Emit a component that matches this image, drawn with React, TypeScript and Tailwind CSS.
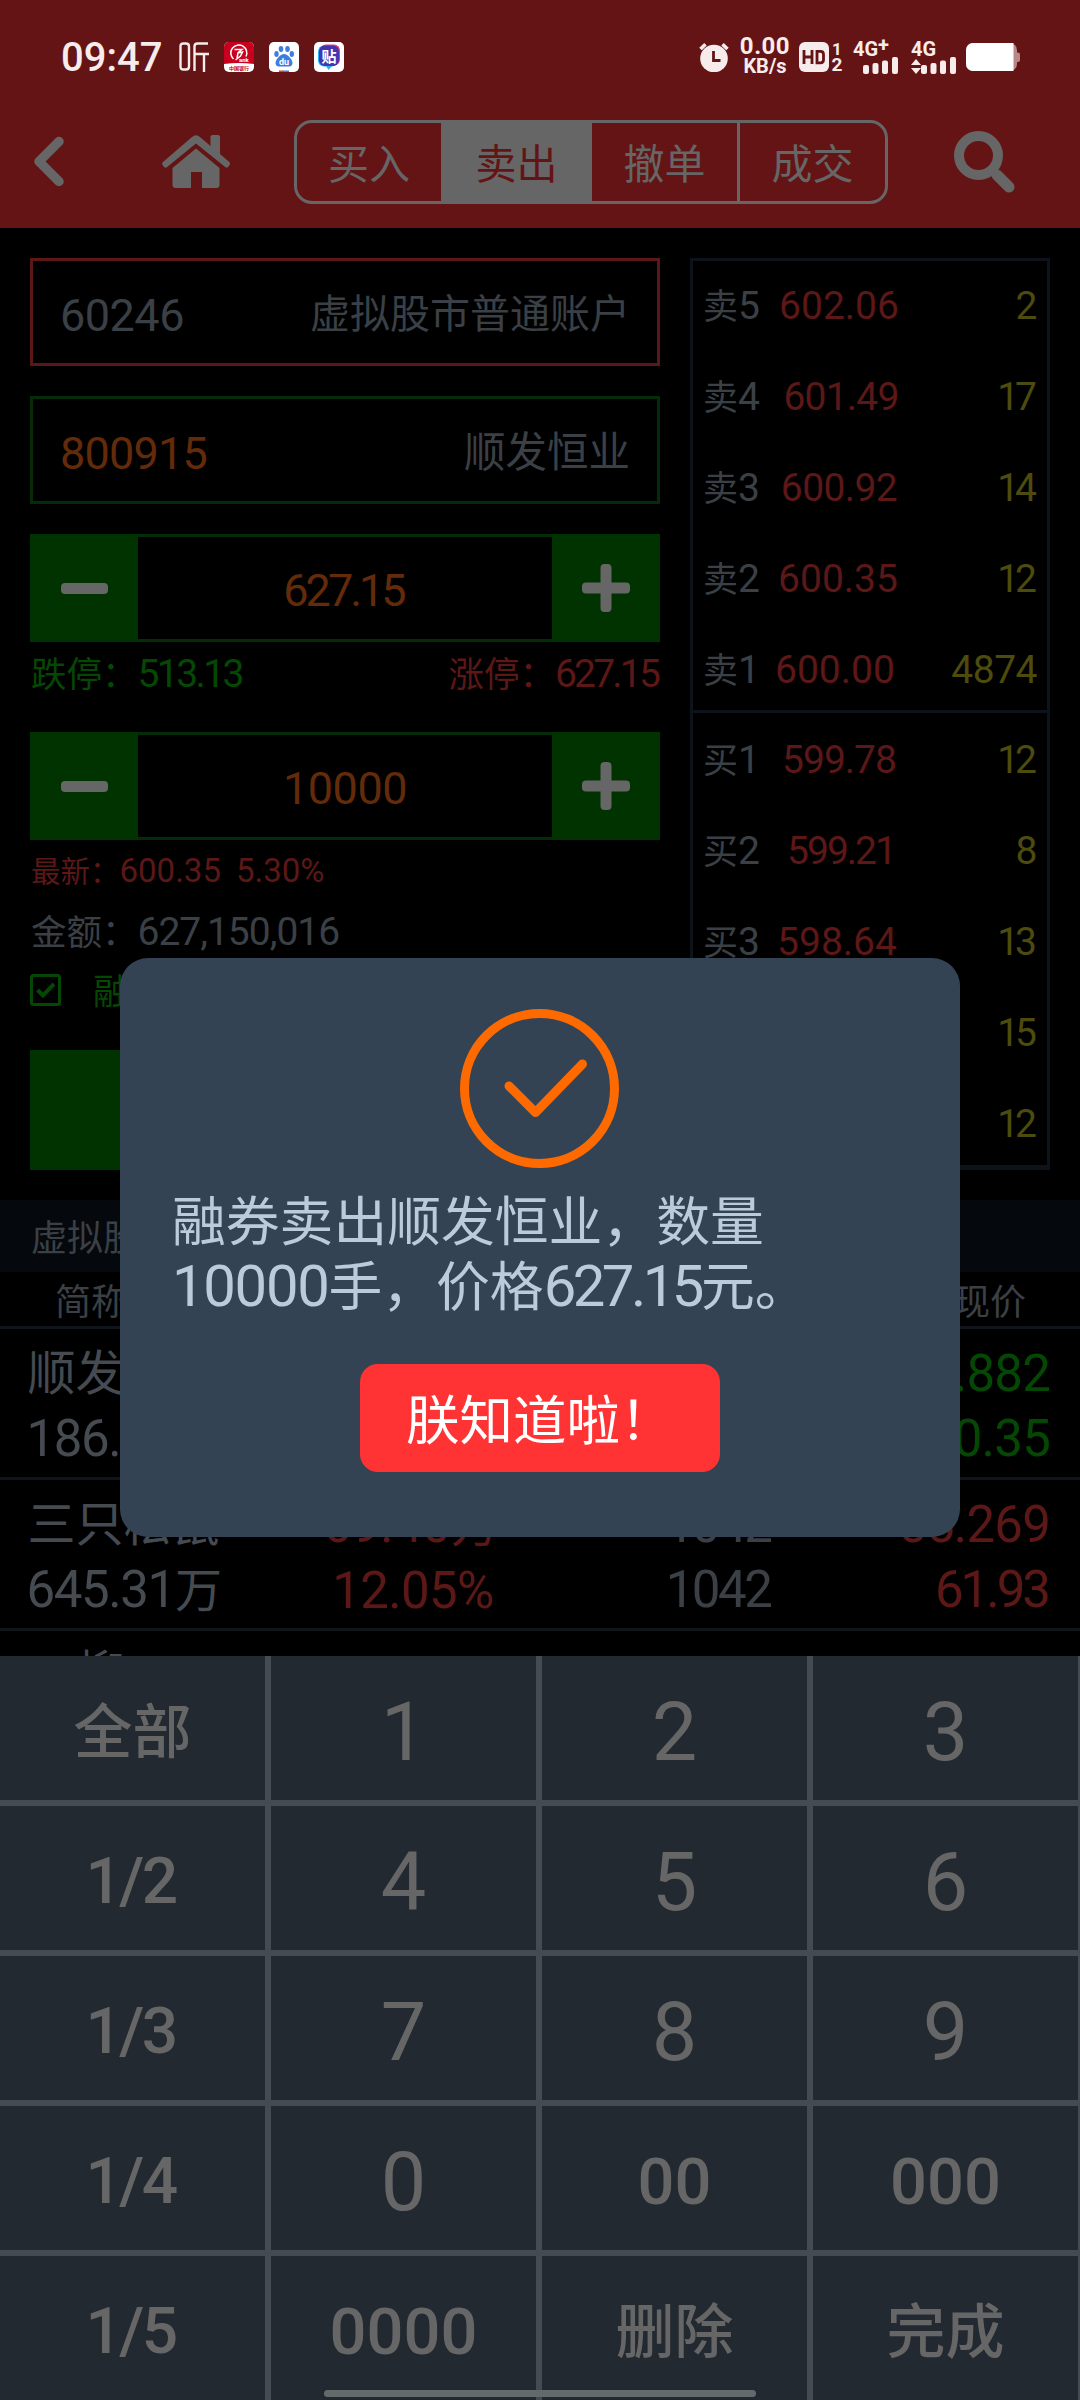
import React from 'react';
import clsx from 'clsx';

interface Quote {
  label: string;
  level: string;
  price?: string;
  priceClass?: string;
  volume: string;
}

interface Holding {
  name: string;
  marketValue: string;
  profit?: string;
  rate?: string;
  amount?: string;
  available?: string;
  cost: string;
  price: string;
  color: string;
}

const TABS = [
  { label: '买入', className: 'w-[144px] text-[#666]' },
  { label: '卖出', className: 'w-[151px] bg-[#666] text-[#641414]' },
  { label: '撤单', className: 'w-[148px] border-r-[3px] border-[#666] text-[#666]' },
  { label: '成交', className: 'w-[145px] text-[#666]' },
];

const SELL_QUOTES: Quote[] = [
  { label: '卖', level: '5', price: '602.06', volume: '2' },
  { label: '卖', level: '4', price: '601.49', priceClass: 'tracking-[-0.8px] pl-1', volume: '17' },
  { label: '卖', level: '3', price: '600.92', priceClass: 'tracking-[-0.6px]', volume: '14' },
  { label: '卖', level: '2', price: '600.35', priceClass: 'pr-0.5', volume: '12' },
  { label: '卖', level: '1', price: '600.00', priceClass: 'pr-2.5', volume: '4874' },
];

const BUY_QUOTES: Quote[] = [
  { label: '买', level: '1', price: '599.78', priceClass: 'tracking-[-1px]', volume: '12' },
  { label: '买', level: '2', price: '599.21', priceClass: 'tracking-[-2px] pl-1', volume: '8' },
  { label: '买', level: '3', price: '598.64', priceClass: 'pr-1', volume: '13' },
  { label: '买', level: '4', volume: '15' },
  { label: '买', level: '5', volume: '12' },
];

const HOLDINGS: Holding[] = [
  {
    name: '顺发恒业',
    marketValue: '186.71',
    cost: '627.882',
    price: '600.35',
    color: 'text-[#044804]',
  },
  {
    name: '三只松鼠',
    marketValue: '645.31',
    profit: '69.40',
    rate: '12.05%',
    amount: '1042',
    available: '1042',
    cost: '55.269',
    price: '61.93',
    color: 'text-[#5c1717]',
  },
];

const KEYS = [
  '全部', '1', '2', '3',
  '1/2', '4', '5', '6',
  '1/3', '7', '8', '9',
  '1/4', '0', '00', '000',
  '1/5', '0000', '删除', '完成',
];

const SignalBars = () => (
  <svg width="36" height="17" viewBox="0 0 36 17" fill="#f6ecec">
    <rect x="0" y="8" width="6" height="9" rx="2" />
    <rect x="9.5" y="6" width="6" height="11" rx="2" />
    <rect x="19" y="3.5" width="6" height="13.5" rx="2" />
    <rect x="29" y="0" width="6" height="17" rx="2" />
  </svg>
);

const StatusBar = () => (
  <div className="flex h-[114px] items-center pl-[61px] pr-[60px] text-[#f6ecec]">
    <span className="w-[118px] pt-[2px] text-[40px] font-medium leading-none">09:47</span>
    <svg width="30" height="30" viewBox="0 0 30 30" fill="none" stroke="#f6ecec" strokeWidth="2.4">
      <path d="M1.5 4.5q0-3 3-3h2.5q3 0 3 3v20q0 3-3 3H4.500q-3 0-3-3z" />
      <path d="M29 1.5H18.500q-3 0-3 3V29M15.500 12H30M25 12v18" />
    </svg>

    {/* notification icons */}
    <div className="ml-[15px] flex gap-[15px]">
      <svg width="30" height="30" viewBox="0 0 30 30">
        <rect width="30" height="30" rx="5" fill="#fff" />
        <path d="M5 0h20a5 5 0 0 1 5 5v17q-15-2-30 0V5a5 5 0 0 1 5-5z" fill="#c8001e" />
        <path d="M9.500 17A8 8 0 1 1 22 14.500M10.500 7.500h7.500l-4.500 3.500 5-1-2 4-5 4M14 11l-1 5" fill="none" stroke="#fff" strokeWidth="1.5" />
        <text x="15" y="19.500" fontSize="6" fontWeight="700" fill="#fff">ank</text>
        <text x="5" y="28" fontSize="5" fontWeight="700" fill="#c8001e">中国银行</text>
      </svg>
      <svg width="30" height="30" viewBox="0 0 30 30">
        <rect width="30" height="30" rx="5" fill="#fff" />
        <g fill="#3f7be0">
          <ellipse cx="12" cy="7" rx="2.3" ry="3" />
          <ellipse cx="18.5" cy="7" rx="2.3" ry="3" />
          <ellipse cx="7.5" cy="12" rx="2.2" ry="2.9" />
          <ellipse cx="22.8" cy="12" rx="2.2" ry="2.9" />
          <path d="M15 12c4 0 8.500 6 8.500 9s-2.500 3.500-4.500 3.500h-8c-2 0-4.500-.5-4.500-3.500s4.500-9 8.500-9z" />
        </g>
        <text x="15" y="23" fontSize="9" fontWeight="700" textAnchor="middle" fill="#fff">du</text>
        <path d="M10 28.500h5V30h-5z" fill="#d8413a" />
        <path d="M15 28.500h5V30h-5z" fill="#3f7be0" />
      </svg>
      <svg width="30" height="30" viewBox="0 0 30 30">
        <rect width="30" height="30" rx="5" fill="#fff" />
        <path d="M12 24h6l-3.500 4z" fill="#25b5f5" />
        <rect x="4" y="3.500" width="20" height="21" rx="6" fill="#25b5f5" />
        <rect x="6" y="2.500" width="20" height="21" rx="6" fill="#e0407c" />
        <rect x="5" y="3.500" width="20" height="20.500" rx="6" fill="#4334b0" />
        <text x="15" y="19.500" fontSize="15" fontWeight="700" textAnchor="middle" fill="#fff">贴</text>
      </svg>
    </div>

    <div className="ml-auto flex items-center">
      <svg width="30" height="30" viewBox="0 0 30 30">
        <circle cx="15" cy="16.5" r="13.8" fill="#f6ecec" />
        <path d="M1.500 7l5-4.800M28.500 7l-5-4.800" stroke="#f6ecec" strokeWidth="3.6" />
        <path d="M14.500 9v9.500h7" fill="none" stroke="#641414" strokeWidth="2.8" />
      </svg>
      <div className="ml-[10px] flex w-[52px] flex-col items-center font-bold leading-none">
        <span className="text-[24px] leading-[19px] tracking-[0.5px]">0.00</span>
        <span className="text-[20px] leading-[21px]">KB/s</span>
      </div>
      <svg className="ml-[8px]" width="30" height="30" viewBox="0 0 30 30">
        <rect width="30" height="30" rx="6" fill="#f6ecec" />
        <path d="M5 8v14M13 8v14M5 15h8M18 9.400h3.500q3 0 3 3v5.400q0 3-3 3H18z" fill="none" stroke="#641414" strokeWidth="2.8" />
      </svg>
      <div className="ml-px flex w-[14px] flex-col items-center text-[17px] font-bold leading-[16px]">
        <span>1</span>
        <span className="text-[19px]">2</span>
      </div>
      <div className="ml-[9px] flex h-[31px] w-[46px] flex-col">
        <div className="flex text-[20px] font-bold leading-[15px]">
          4G<span className="-mt-[4px] text-[20px]">+</span>
        </div>
        <div className="mt-auto self-end"><SignalBars /></div>
      </div>
      <div className="ml-[12px] flex h-[31px] w-[46px] flex-col">
        <span className="text-[20px] font-bold leading-[15px]">4G</span>
        <div className="mt-auto flex items-end">
          <svg width="10" height="15" viewBox="0 0 10 15" fill="#f6ecec">
            <path d="M5 0l5 6H0zM5 15L0 9h10z" />
          </svg>
          <SignalBars />
        </div>
      </div>
      <svg className="ml-[9px]" width="54" height="28" viewBox="0 0 54 28">
        <rect x="0" y="0" width="51" height="28" rx="7" fill="#b98787" />
        <rect x="49" y="9.5" width="5" height="9.5" rx="2" fill="#b98787" />
        <path d="M7 0h40.500v28H7a7 7 0 0 1-7-7V7a7 7 0 0 1 7-7z" fill="#fff" />
      </svg>
    </div>
  </div>
);

const NavBar = () => (
  <div className="flex h-[114px] items-start pl-[30px]">
    <svg className="mt-[22px]" width="35" height="51" viewBox="0 0 35 51">
      <path d="M29 5.500L9 25.500l20 20" fill="none" stroke="#666" strokeWidth="9.500" strokeLinejoin="round" strokeLinecap="round" />
    </svg>
    <svg className="ml-[97px] mt-[21px]" width="68" height="53" viewBox="0 0 68 53" fill="#666">
      <path d="M4.500 32.500Q3 33 2 32L.6 30Q-.5 28.500 1 27L30 2q4-3.600 8 0l10.500 9V2q0-2 2-2H56q2 0 2 2v17l9.300 8q1.300 1.500 .2 3L66 32q-1 1-2.500 .2L34 8.500z" />
      <path d="M34 13.500L57.500 33v17q0 3-3 3H40V37H29v16H13.500q-3 0-3-3V33z" />
    </svg>
    <div className="ml-[64px] mt-[6px] flex h-[84px] w-[594px] overflow-hidden rounded-[18px] border-[3px] border-[#666]">
      {TABS.map((tab) => (
        <div
          key={tab.label}
          className={clsx('flex items-center justify-center pt-[6px] text-[41px] leading-none', tab.className)}
        >
          {tab.label}
        </div>
      ))}
    </div>
    <svg className="ml-[66px] mt-[17px]" width="61" height="62" viewBox="0 0 61 62" fill="none" stroke="#666">
      <circle cx="24.500" cy="24.500" r="19.500" strokeWidth="10" />
      <path d="M43 44l12 12" strokeWidth="11" strokeLinecap="round" />
    </svg>
  </div>
);

const Stepper: React.FC<{ value: string; tracking: string }> = ({ value, tracking }) => (
  <div className="flex h-[108px] shrink-0 bg-[#003300]">
    <div className="flex w-[108px] items-center justify-center">
      <div className="h-[11px] w-[47px] rounded-[4px] bg-[#666]" />
    </div>
    <div className={clsx('flex flex-1 items-center justify-center border-y-[3px] border-[#052c08] bg-black pt-[4px] text-[45px] leading-none text-[#632b09]', tracking)}>
      {value}
    </div>
    <div className="flex w-[108px] items-center justify-center">
      <svg width="48" height="48" viewBox="0 0 48 48" fill="#666">
        <rect x="0" y="18.5" width="48" height="11" rx="4" />
        <rect x="18.5" y="0" width="11" height="48" rx="4" />
      </svg>
    </div>
  </div>
);

const QuoteRow: React.FC<{ quote: Quote }> = ({ quote }) => (
  <div className="flex h-[91px] shrink-0 items-center pl-[10px] pr-[10px] pt-[3px] text-[39px] leading-none">
    <div className="flex w-[72px] items-baseline text-[#3a4046]">
      <span className="text-[35px]">{quote.label}</span>
      <span>{quote.level}</span>
    </div>
    <span className={clsx('w-[128px] text-center text-[#5c1717]', quote.priceClass)}>{quote.price}</span>
    <span className={clsx('ml-auto text-[#4d4b0d]', quote.volume.startsWith('1') ? 'mr-[4px] tracking-[-4px]' : 'tracking-[-0.5px]')}>
      {quote.volume}
    </span>
  </div>
);

const OrderBook = () => (
  <div className="flex h-[912px] w-[360px] flex-col border-[3px] border-b-[5px] border-[#0d131a]">
    <div className="h-[452px] shrink-0 border-b-[3px] border-[#0d131a]">
      <div className="-mt-0.5 flex flex-col">
        {SELL_QUOTES.map((quote) => (
          <QuoteRow key={quote.level} quote={quote} />
        ))}
      </div>
    </div>
    <div className="flex flex-col">
      {BUY_QUOTES.map((quote) => (
        <QuoteRow key={quote.level} quote={quote} />
      ))}
    </div>
  </div>
);

const OrderForm = () => (
  <div className="flex w-[630px] flex-col">
    <div className="flex h-[108px] shrink-0 items-center justify-between border-[3px] border-[#5c1717] pl-[27px] pr-[27px] pt-[6px] leading-none text-[#3a4046]">
      <span className="text-[45px] tracking-[-0.5px]">60246</span>
      <span className="text-[40px]">虚拟股市普通账户</span>
    </div>
    <div className="mt-[30px] flex h-[108px] shrink-0 items-center justify-between border-[3px] border-[#052c08] pl-[27px] pr-[27px] pt-[6px] leading-none">
      <span className="text-[45px] tracking-[-0.8px] text-[#632b09]">800915</span>
      <span className="text-[41.5px] text-[#3a4046]">顺发恒业</span>
    </div>

    <div className="mt-[30px]">
      <Stepper value="627.15" tracking="pr-[3px] tracking-[-3px]" />
    </div>
    <div className="flex h-[64px] items-center justify-between pl-px pt-px text-[35.5px] leading-none">
      <div className="flex items-baseline text-[#044804]">
        跌停：<span className="text-[39px] tracking-[-2.6px]">513.13</span>
      </div>
      <div className="flex items-baseline text-[#5c1717]">
        涨停：<span className="mr-[2px] text-[39px] tracking-[-2.8px]">627.15</span>
      </div>
    </div>

    <div className="mt-[26px]">
      <Stepper value="10000" tracking="tracking-[-0.5px]" />
    </div>
    <div className="flex h-[62px] items-center pl-px">
      <div className="flex items-baseline text-[29.5px] leading-none text-[#5c1717]">
        最新：<span className="text-[33px]">600.35</span>
        <span className="ml-[15px] text-[33px]">5.30%</span>
      </div>
    </div>
    <div className="flex h-[58px] items-center pl-px pt-[3px]">
      <div className="flex items-baseline text-[35.5px] leading-none text-[#3a4046]">
        金额：<span className="text-[39px] tracking-[-1px]">627,150,016</span>
      </div>
    </div>
    <div className="flex h-[60px] items-center text-[36px] leading-none text-[#044804]">
      <svg width="31" height="32" viewBox="0 0 31 32" fill="none" stroke="#044804">
        <rect x="1.5" y="1.5" width="28" height="29" rx="2" strokeWidth="3" />
        <path d="M7.500 16l5.500 5.500L24 10" strokeWidth="4" />
      </svg>
      <span className="ml-[32px] pt-[5px]">融券</span>
    </div>

    <button className="mt-[30px] h-[120px] bg-[#003300]" aria-label="卖出" />
  </div>
);

const HoldingRow: React.FC<{ holding: Holding }> = ({ holding }) => (
  <div className="flex h-[151px] border-b-[3px] border-[#10151b] pt-[12px] text-center text-[51px] leading-[65px] text-[#454b51]">
    <div className="w-[247px] shrink-0">
      <div className="pt-px text-[48px] leading-[64px]">{holding.name}</div>
      <div className="tracking-[-1.4px]">
        {holding.marketValue}
        <span className="text-[47px]">万</span>
      </div>
    </div>
    <div className={clsx('w-[328px] shrink-0', holding.color)}>
      {holding.profit && (
        <div>
          {holding.profit}
          <span className="text-[48px]">万</span>
        </div>
      )}
      {holding.rate && <div className="pl-1 tracking-[-0.7px]">{holding.rate}</div>}
    </div>
    <div className="w-[286px] shrink-0 tracking-[-2.5px] text-[#3a4046]">
      <div>{holding.amount}</div>
      <div>{holding.available}</div>
    </div>
    <div className={clsx('flex-1 pr-[30px] text-right', holding.color)}>
      <div className="tracking-[-0.8px]">{holding.cost}</div>
      <div className={holding.price.includes('1') ? 'pr-[2px] tracking-[-3px]' : 'tracking-[-0.8px]'}>{holding.price}</div>
    </div>
  </div>
);

const Holdings = () => (
  <div className="mt-[30px]">
    <div className="flex h-[72px] items-center bg-[#05090d] pl-[31px] pt-[5px] text-[36px] leading-none text-[#3a4046]">
      虚拟股市
    </div>
    <div className="flex h-[57px] items-center justify-between border-b-[3px] border-[#10151b] pl-[55px] pr-[54px] pt-[7px] text-[36px] leading-none text-[#3a4046]">
      <span>简称</span>
      <span>现价</span>
    </div>
    {HOLDINGS.map((holding) => (
      <HoldingRow key={holding.name} holding={holding} />
    ))}
    <div className="h-[25px] overflow-hidden pl-[29px] pt-[10px] text-[48px] leading-[65px] text-[#454b51]">
      一柳
    </div>
  </div>
);

const keySize = (key: string) => {
  if (/^\d$/.test(key)) return 'pt-[8px] text-[81px]';
  if (key.includes('/')) return 'pr-[4px] pt-[8px] text-[64px] font-medium tracking-[-2.5px]';
  if (/^0+$/.test(key)) return 'pt-[8px] text-[65px] font-medium';
  return 'pt-[9px] text-[59px] font-medium';
};

const Keypad = () => (
  <div className="relative h-[744px] overflow-hidden bg-[#222930]">
    <div className="grid w-[1084px] grid-cols-[repeat(4,271px)]">
      {KEYS.map((key) => (
        <div
          key={key}
          className={clsx(
            'flex h-[150px] items-center justify-center border-b-[6px] border-r-[6px] border-[#444b53] leading-none text-[#666]',
            keySize(key)
          )}
        >
          {key}
        </div>
      ))}
    </div>
    <div className="absolute bottom-[3px] left-[324px] h-[7px] w-[432px] rounded-full bg-[#64696c]" />
  </div>
);

const ResultDialog = () => (
  <div className="absolute left-[120px] top-[958px] flex h-[579px] w-[840px] flex-col items-center rounded-[28px] bg-[#334353] pt-[51px]">
    <svg width="160" height="160" viewBox="0 0 160 160" fill="none" stroke="#ff6a00" strokeWidth="9">
      <circle cx="79.5" cy="79.5" r="75" />
      <path d="M49 77l26.500 26.500L122.500 55" strokeLinecap="round" strokeLinejoin="round" />
    </svg>
    <div className="mt-[23px] w-[736px] text-[53.8px] text-[#bccbdc]">
      <div className="leading-[62px]">融券卖出顺发恒业，数量</div>
      <div className="flex items-baseline leading-[64px]">
        <span className="text-[58px] tracking-[-1.3px]">10000</span>手，价格
        <span className="text-[58px] tracking-[-3.5px]">627.15</span>元。
      </div>
    </div>
    <button className="mt-[44px] flex h-[108px] w-[360px] items-center rounded-[18px] bg-[#ff3333] pl-[46px] pt-[7px] text-[53.5px] leading-none text-white">
      朕知道啦！
    </button>
  </div>
);

export default function App() {
  return (
    <div className='relative h-[2400px] w-[1080px] overflow-hidden bg-black [font-family:Roboto,"Noto_Sans_CJK_SC",sans-serif]'>
      <header className="h-[228px] bg-[#641414]">
        <StatusBar />
        <NavBar />
      </header>
      <main className="h-[1428px] overflow-hidden">
        <div className="flex gap-[30px] px-[30px] pt-[30px]">
          <OrderForm />
          <OrderBook />
        </div>
        <Holdings />
      </main>
      <Keypad />
      <ResultDialog />
    </div>
  );
}
